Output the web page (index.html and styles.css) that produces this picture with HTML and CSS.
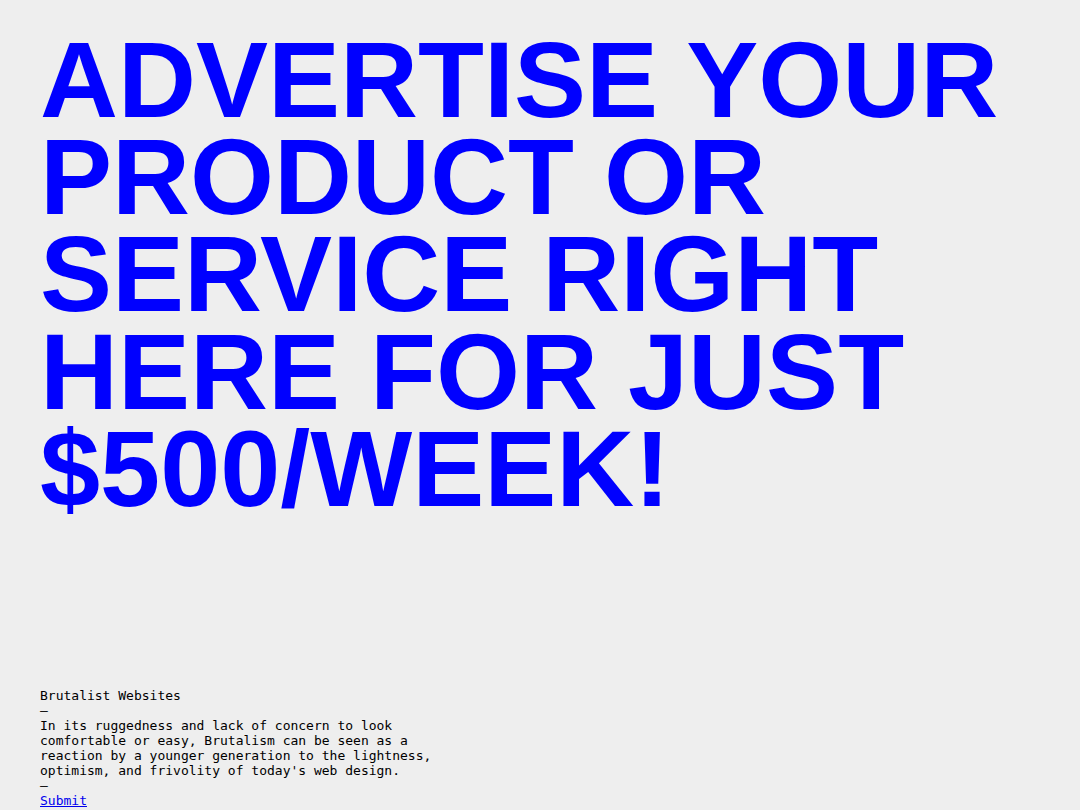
FILE: index.html
```html
<!DOCTYPE html>
<html lang="en">
<head>
<meta charset="utf-8">
<title>Brutalist Websites</title>
<link rel="stylesheet" href="styles.css">
</head>
<body>
<main class="page">
  <h1 class="headline">ADVERTISE YOUR PRODUCT OR SERVICE RIGHT HERE FOR JUST $500/WEEK!</h1>
  <footer class="info">
    <div>Brutalist Websites</div>
    <div>—</div>
    <p class="desc">In its ruggedness and lack of concern to look comfortable or easy, Brutalism can be seen as a reaction by a younger generation to the lightness, optimism, and frivolity of today's web design.</p>
    <div>—</div>
    <a class="submit" href="#">Submit</a>
  </footer>
</main>
</body>
</html>
```
FILE: styles.css
```css
html, body {
  margin: 0;
  padding: 0;
  background: #eeeeee;
}
.page {
  padding: 31px 40px 0 40px;
  display: flex;
  flex-direction: column;
}
.headline {
  margin: 0;
  font-family: "Liberation Sans", Arial, sans-serif;
  font-weight: bold;
  font-size: 108px;
  line-height: 0.9;
  color: #0000ff;
  letter-spacing: 0;
}
.info {
  margin-top: 171px;
  font-family: "DejaVu Sans Mono", monospace;
  font-size: 13px;
  line-height: 15px;
  color: #000;
}
.desc {
  margin: 0;
  width: 400px;
}
.submit {
  color: #0000ee;
  text-decoration: underline;
}
```
